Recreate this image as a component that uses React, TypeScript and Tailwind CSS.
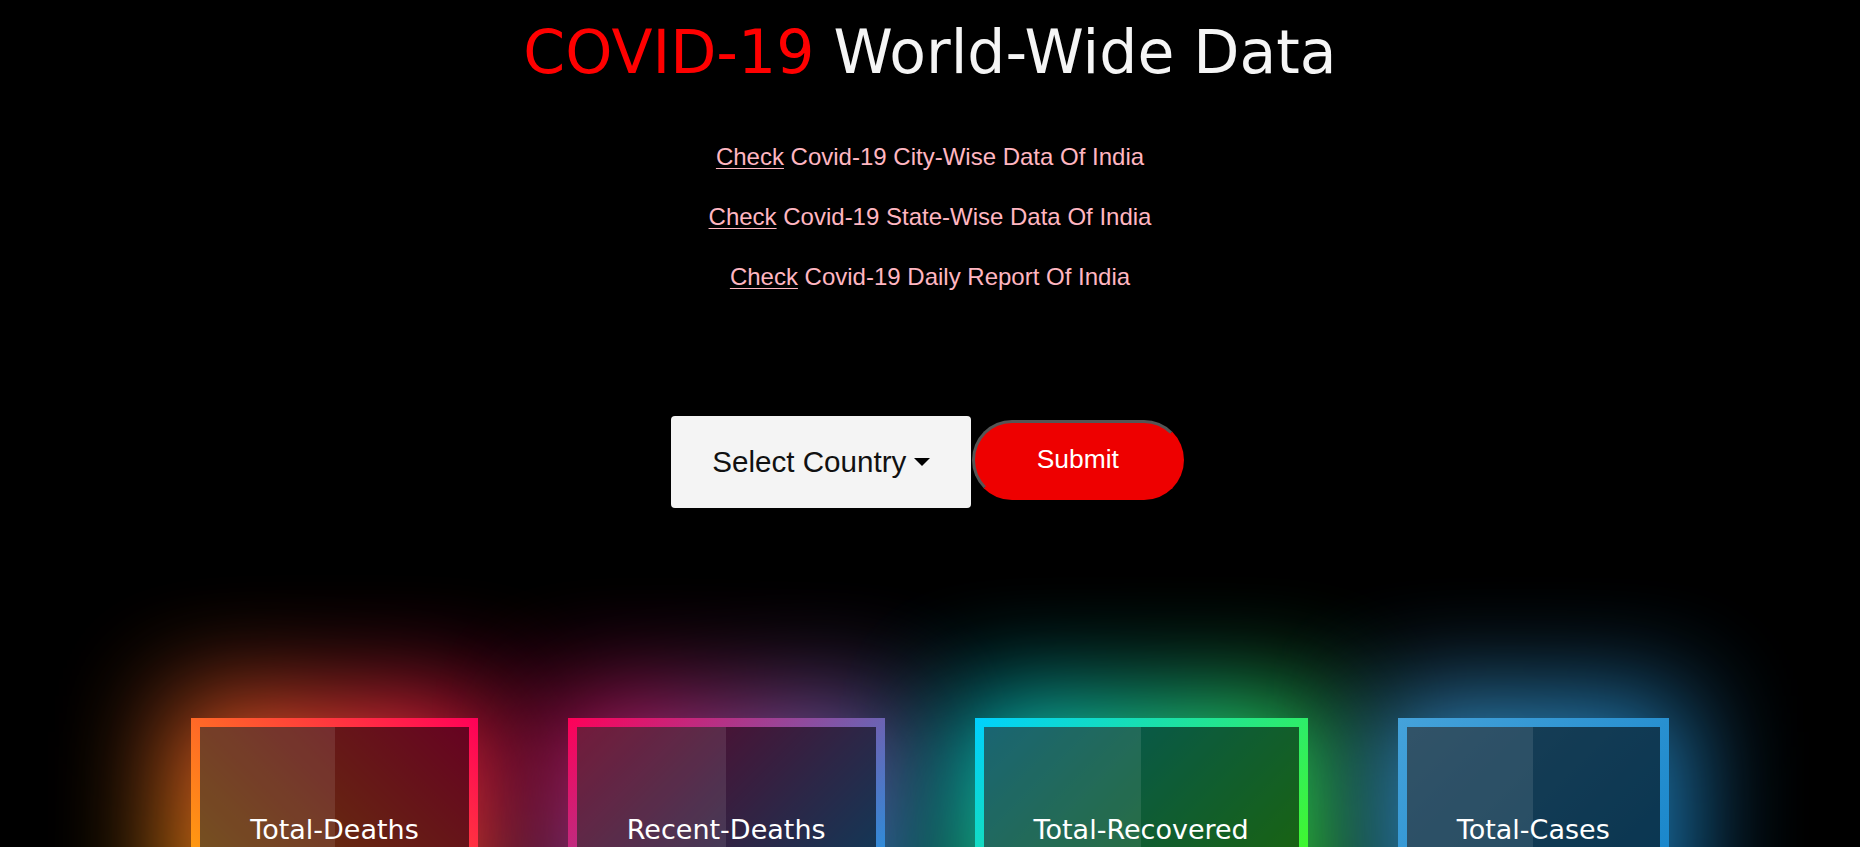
import React from "react";

const cards = [
  {
    label: "Total-Deaths",
    grad: "bg-[linear-gradient(45deg,#ffbc00,#ff0058)]",
  },
  {
    label: "Recent-Deaths",
    grad: "bg-[linear-gradient(135deg,#ff0058,#03a9f4)]",
  },
  {
    label: "Total-Recovered",
    grad: "bg-[linear-gradient(135deg,#00d0ff,#4dff03)]",
  },
  {
    label: "Total-Cases",
    grad: "bg-[linear-gradient(135deg,#45a2da,#1081c8)]",
  },
];

const links = [
  "Covid-19 City-Wise Data Of India",
  "Covid-19 State-Wise Data Of India",
  "Covid-19 Daily Report Of India",
];

export default function App() {
  return (
    <div className="h-screen overflow-hidden bg-black flex flex-col items-center">
      <h1 className="mt-[17px] text-[60px] leading-[70px] font-normal whitespace-nowrap font-['DejaVu_Sans',sans-serif]">
        <span className="text-[#ff0000] font-['Comic_Sans_MS','DejaVu_Sans',sans-serif]">
          COVID-19
        </span>{" "}
        <span className="text-[#f5f5f5]">World-Wide Data</span>
      </h1>

      <div className="mt-[40px] flex flex-col items-center text-[24px] leading-[60px] text-[#ffb6c1] font-['Liberation_Sans',Arial,sans-serif]">
        {links.map((t) => (
          <p key={t} className="whitespace-nowrap">
            <a href="#" className="underline underline-offset-[3px] decoration-1">
              Check
            </a>{" "}
            {t}
          </p>
        ))}
      </div>

      <div className="mt-[109px] mr-[5px] flex items-start font-['Liberation_Sans',Arial,sans-serif]">
        <button
          type="button"
          className="h-[92px] px-[41px] rounded-[4px] bg-[#f4f4f4] text-[#111] text-[29.6px] leading-[1.5] whitespace-nowrap flex items-center"
        >
          Select Country
          <span className="inline-block w-0 h-0 ml-[7.5px] border-t-[8.9px] border-x-[8.9px] border-t-black border-x-transparent" />
        </button>
        <button
          type="button"
          className="ml-[1px] mt-[4px] h-[80px] w-[212px] rounded-full border-[3px] border-t-[#555] border-l-[#555] border-r-[#ee0000] border-b-[#ee0000] bg-[#ee0000] text-white text-[26.4px] flex items-center justify-center"
        >
          Submit
        </button>
      </div>

      <div className="mt-[210px] flex items-start justify-center gap-[90px] font-['DejaVu_Sans',Verdana,sans-serif]">
        {cards.map((c) => (
          <div key={c.label} className="relative">
            <div
              className={`absolute -inset-[22px] ${c.grad} blur-[55px] opacity-90`}
            />
            <div className={`relative z-10 p-[9px] ${c.grad}`}>
              <div className="relative h-[208px] bg-black/60 px-[50px] pt-[87px]">
                <div className="absolute left-0 top-0 h-full w-1/2 bg-white/10" />
                <div className="relative text-[27px] leading-[1.164] text-white whitespace-nowrap text-center">
                  {c.label}
                </div>
              </div>
            </div>
          </div>
        ))}
      </div>
    </div>
  );
}
